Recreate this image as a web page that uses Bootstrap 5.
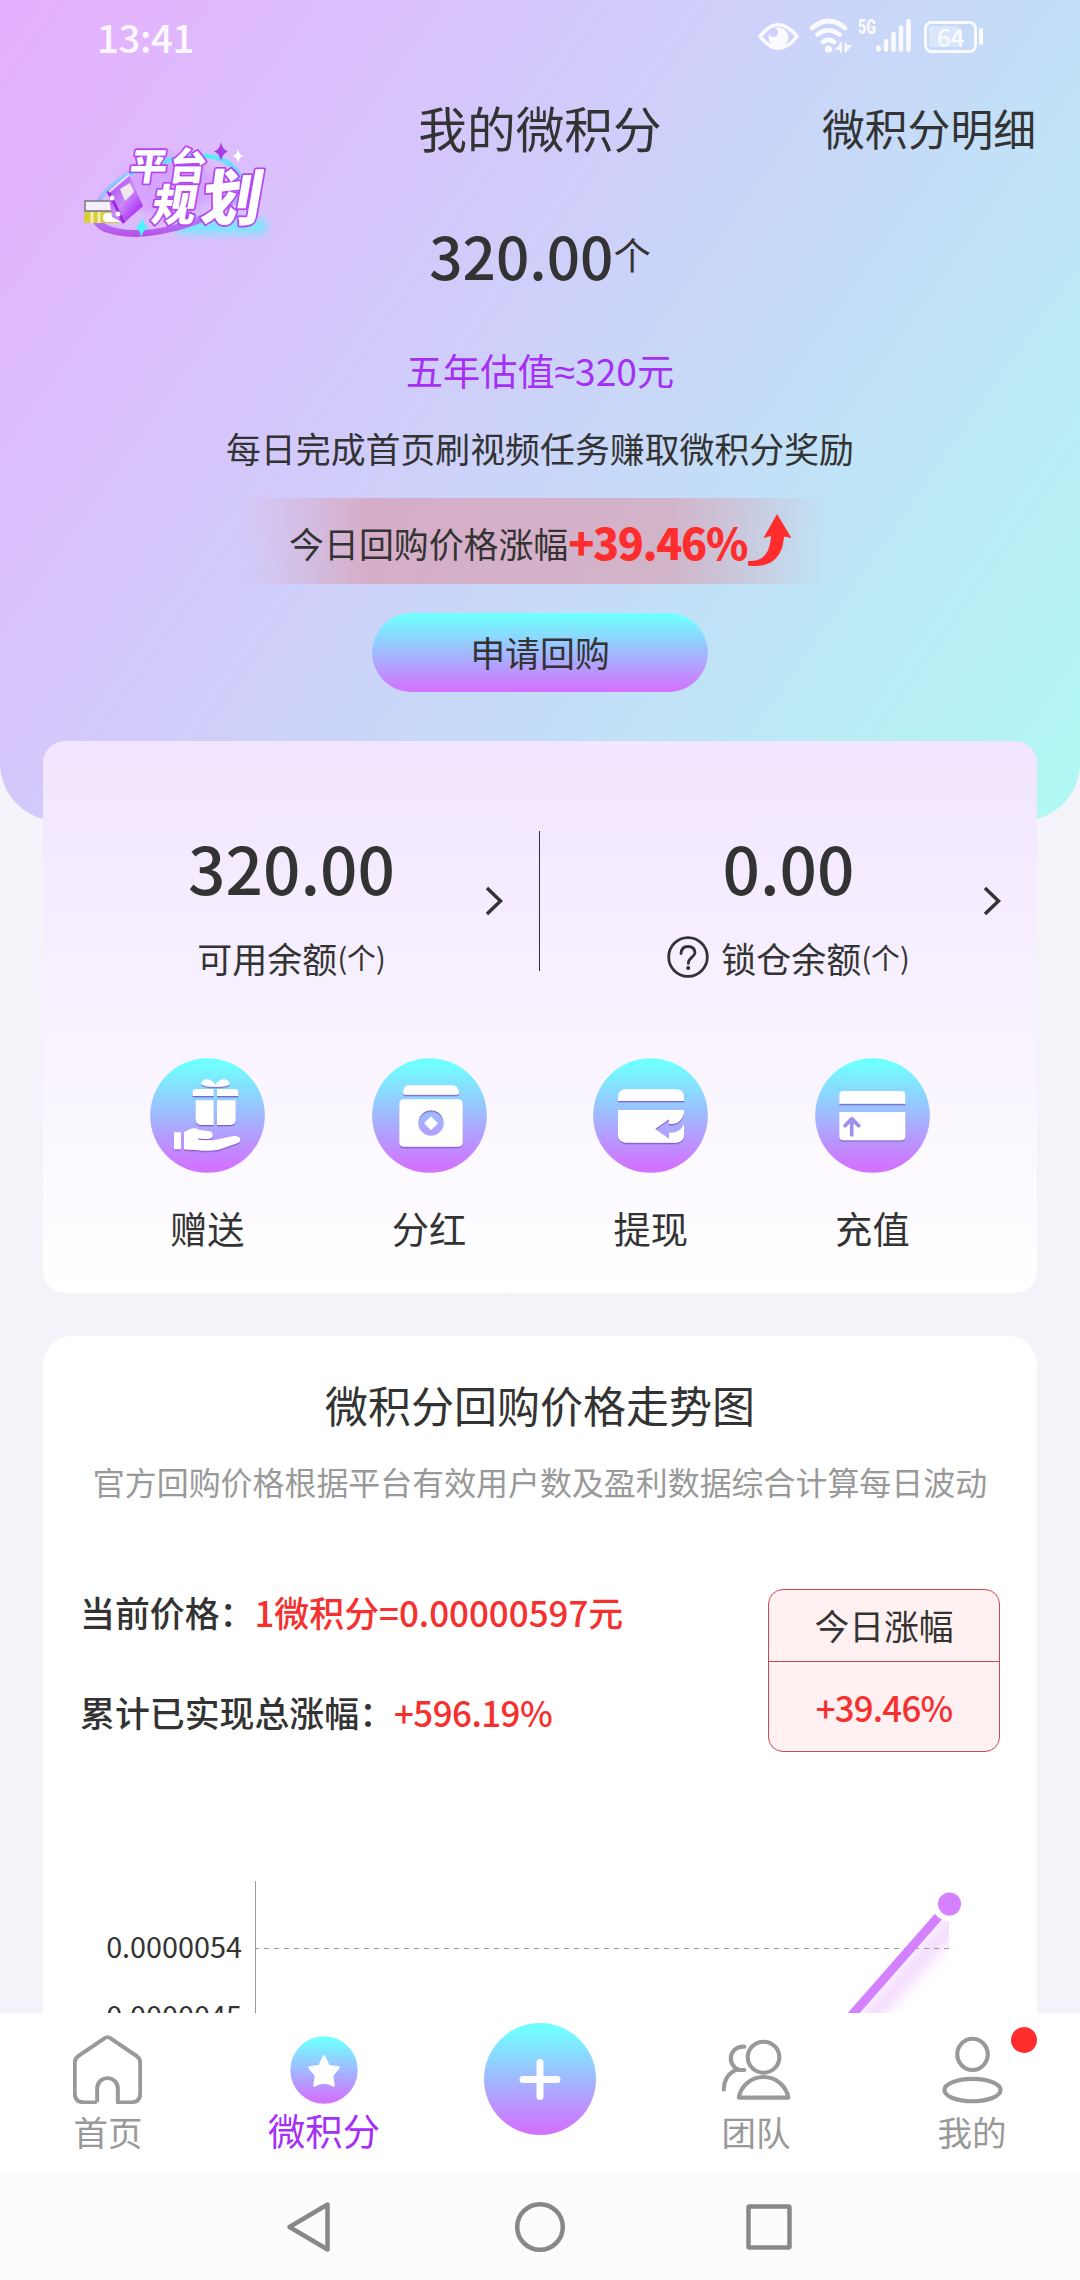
<!DOCTYPE html>
<html lang="zh-CN">
<head>
<meta charset="utf-8">
<meta name="viewport" content="width=device-width, initial-scale=1">
<title>我的微积分</title>
<link href="https://cdn.jsdelivr.net/npm/bootstrap@5.3.0/dist/css/bootstrap.min.css" rel="stylesheet">
<style>
:root{--ink:#333;--violet:#a62ff5;--red:#f5302e;--muted:#999}
body{font-family:"Noto Sans CJK SC",sans-serif;color:var(--ink);background:#f4f3f9;line-height:1;width:1080px;height:2280px;overflow:hidden}
svg{display:block;flex:none}
.screen{height:2280px}
.scroll-area{height:2013px}
.hero{height:821px;border-radius:0 0 58px 58px;background:linear-gradient(125deg,#e7aeff,#b0f9f3)}
.status{height:80px;padding:0 96px 8px 97px;color:#fdf8ff}
.clock{font-size:38.4px;font-weight:500;letter-spacing:-.4px}
.title-row{height:94px;display:grid;grid-template-columns:1fr auto 1fr;align-items:center;padding:1px 44px 0}
.page-title{font-size:48.7px}
.detail-link{font-size:42.8px;color:var(--ink);text-decoration:none;text-align:right}
.promo{left:80px;top:136px}
.promo svg{overflow:visible}
.total{height:161px}
.total-num{font-size:58.5px;font-weight:500;padding-top:1px}
.total-unit{font-size:37.4px}
.estimate{height:71px;font-size:37.2px;color:var(--violet);padding-top:1px}
.approx{font-family:"Noto Sans",sans-serif}
.hint{height:84px;font-size:34.9px;padding-top:1px}
.rise{height:86px;margin-top:8px;width:640px;font-size:34.9px;background:linear-gradient(90deg,rgba(219,150,167,0) 3%,rgba(219,150,167,.2) 11%,rgba(219,150,167,.6) 23%,rgba(219,150,167,.58) 70%,rgba(219,150,167,.2) 87%,rgba(219,150,167,0) 95%)}
.rise-num{font-size:43px;font-weight:900;color:#ff2d2d;letter-spacing:-1.4px}
.buy-btn{width:336px;height:79px;margin-top:29px;border:0;border-radius:40px;font-size:34.9px;color:var(--ink);background:linear-gradient(#70ffff 4%,#d175ff 96%);line-height:1}
.panel{margin:0 43px;border:0}
.wallet{margin-top:-80px;height:552px;border-radius:22px;background:linear-gradient(#f1e5ff,#fff)}
.balances{height:300px}
.balance{width:497px;padding-top:87px}
.bal-num{font-size:65.7px;font-weight:500;height:78px}
.bal-label{font-size:35px;height:102px}
.bal-label span{font-size:28.8px}
.help{margin-right:12px}
.vline{width:1px;height:140px;background:#333;top:90px;left:496px}
.chev-l{left:442px;top:145px}
.chev-r{left:940px;top:145px}
.actions{padding:17px 53.5px 0}
.action{width:221.7px;font-size:37.3px}
.action-label{height:111px}
.trend{margin-top:43px;border-radius:29px;height:900px;background:#fff}
.trend-title{font-size:43px;height:90px;padding-top:47px}
.trend-desc{font-size:31.95px;color:var(--muted);height:67px;margin-top:22px}
.facts{margin-top:74px;padding:0 37px;height:163px}
.facts-left{padding-bottom:15px}
.fact{font-size:34.9px;font-weight:500;height:50px}
.fact b{font-weight:500;color:var(--red)}
.fact .tight{letter-spacing:-.55px}
.fact-first{height:47px}
.today{width:232px;border:1.4px solid #c64b50;border-radius:15px;background:#fff1f1;font-size:34.8px}
.today-top{height:72px;border-bottom:1.4px solid #c64b50}
.today-bot{height:90px;color:var(--red);font-weight:500;letter-spacing:-.8px}
.chart{margin-top:119px}
.tabbar{height:161px;background:#fff;color:var(--muted);font-size:34.5px}
.tab{width:216px;padding-top:21px}
.tab-icon{height:72px}
.tab-label{height:50px}
.tab-on{color:var(--violet);font-size:37.4px}
.home-icon{margin:-1px 2px 1px 0}
.tab-plus{padding-top:10px}
.dot{width:26px;height:26px;background:#ff2d2d;right:43px;top:14px}
.sysnav{height:106px;background:#fcfcfc}
</style>
</head>
<body>
<svg width="0" height="0" class="position-absolute">
  <defs>
    <linearGradient id="orb" x1="0" y1="0" x2="0" y2="1"><stop offset=".05" stop-color="#70ffff"/><stop offset=".95" stop-color="#d173ff"/></linearGradient>
    <filter id="lift" x="-10%" y="-10%" width="120%" height="125%"><feDropShadow dx="0" dy="4" stdDeviation="1" flood-color="#7a50c0" flood-opacity=".85"/></filter>
  </defs>
</svg>
<div class="screen d-flex flex-column">
  <main class="scroll-area overflow-hidden flex-shrink-0">
    <header class="hero position-relative d-flex flex-column align-items-stretch">
      <div class="status d-flex align-items-center justify-content-between">
        <span class="clock">13:41</span>
        <svg width="228" height="44" viewBox="756 14 228 44" fill="none" stroke="#fbfbff" stroke-width="3.6" stroke-linecap="round">
          <path d="M760 36.500Q778.500 13 797 36.500Q778.500 60 760 36.500Z" stroke-linejoin="round"/>
          <circle cx="778.500" cy="37.500" r="10" fill="#fbfbff" stroke="none"/>
          <circle cx="773.500" cy="32.500" r="4.600" fill="#ccd2fb" stroke="none"/>
          <path d="M812 28Q828.500 14 845 28M817.500 34.500Q828.500 26 839.500 34.500M823 42Q828.500 37.500 834 42" stroke-width="4.600"/>
          <circle cx="828.500" cy="49" r="3.500" fill="#fbfbff" stroke="none"/>
          <path d="M841 43v9M841 44l-4 5h4M845.500 43v9M845.500 51l4.500-5h-4.500" stroke-width="2"/>
          <text x="858" y="34" font-size="20" font-family="Roboto" font-weight="900" fill="#fbfbff" stroke="none" textLength="18" lengthAdjust="spacingAndGlyphs">5G</text>
          <path d="M878.500 47.500v2M886 41v8.500M893.500 34v15.500M901 27.500v22M908.500 21v28.500" stroke-width="4.600"/>
          <rect x="925.500" y="22.500" width="50" height="29" rx="6" stroke-width="3"/>
          <rect x="929" y="26" width="30" height="21" rx="2" fill="#fff" fill-opacity=".35" stroke="none"/>
          <text x="937" y="46.500" font-size="24" font-weight="500" fill="#fbfbff" stroke="none">64</text>
          <path d="M981 30v13" stroke-width="4"/>
        </svg>
      </div>
      <div class="title-row">
        <span></span><span class="page-title">我的微积分</span><a class="detail-link" href="#">微积分明细</a>
      </div>
      <div class="promo position-absolute">
        <svg width="200" height="112" viewBox="80 136 200 112">
          <defs>
            <linearGradient id="ring" x1="0" y1="0" x2="0" y2="1"><stop offset="0" stop-color="#56ecff"/><stop offset=".55" stop-color="#a8b4ff"/><stop offset="1" stop-color="#b94de8"/></linearGradient>
            <linearGradient id="book" x1="0" y1="0" x2="1" y2="1"><stop offset="0" stop-color="#a93af2"/><stop offset=".5" stop-color="#c98af8"/><stop offset="1" stop-color="#a000f5"/></linearGradient>
            <filter id="soft" x="-20%" y="-60%" width="140%" height="220%"><feGaussianBlur stdDeviation="4"/></filter>
          </defs>
          <ellipse cx="168" cy="185" rx="48" ry="30" fill="#c878ff" opacity=".35" filter="url(#soft)"/>
          <rect x="175" y="219" width="92" height="15" rx="7" fill="#69edff" opacity=".85" filter="url(#soft)"/>
          <path fill="url(#ring)" fill-rule="evenodd" d="M92 216C92 190 130 164 178 156C218 146 243 164 245 185C247 212 176 236 136 237C108 236 92 230 92 216ZM98 212C98 226 120 231 142 230C178 229 236 205 236 181C235 162 210 153 178 161C136 168 98 192 98 212Z"/>
          <rect x="85" y="201" width="36" height="10" fill="#f5eefc" stroke="#777" stroke-width="1.500"/>
          <rect x="84" y="212" width="35" height="11" fill="#d8ce3a"/><path d="M92 212v11M99 212v11" stroke="#f2edb0" stroke-width="3"/>
          <rect x="103" y="213" width="19" height="9" rx="4" fill="#fff"/>
          <path d="M129 175L143 206L124 223L112 217L108 191Z" fill="url(#book)"/>
          <path d="M108 191L124 223" stroke="#9c2ce0" stroke-width="3"/>
          <path d="M129 175L109 192" stroke="#f1d8ff" stroke-width="2"/>
          <path d="M120 189L130 183L134 192L125 201Z" fill="#f0e6ee"/>
          <circle cx="112" cy="198" r="2.500" fill="#fff"/><circle cx="118" cy="214" r="2.500" fill="#fff"/>
          <g font-weight="900" font-family="Noto Sans CJK SC" fill="#fff" stroke="#b548ef" stroke-width="3.600" stroke-linejoin="round" paint-order="stroke">
            <text transform="translate(128 180) skewX(-8)" font-size="37.500" letter-spacing="2">平台</text>
            <text transform="translate(150 221) skewX(-10)" font-size="44">规</text>
            <text transform="translate(199 220) skewX(-10)" font-size="60">划</text>
          </g>
          <path d="M221 142Q222.500 150 228 151.500Q222.500 153 221 161Q219.500 153 214 151.500Q219.500 150 221 142Z" fill="#a83fe6"/>
          <path d="M238 149Q239 155 243.500 156Q239 157 238 163Q237 157 232.500 156Q237 155 238 149Z" fill="#fff"/>
          <path d="M142 217Q143.500 226 149 227.500Q143.500 229 141 237Q140 229 135 227.500Q140.500 226 142 217Z" fill="#4cf5ff"/>
        </svg>
      </div>
      <div class="total d-flex align-items-center justify-content-center"><span class="total-num">320.00</span><span class="total-unit">个</span></div>
      <div class="estimate d-flex align-items-center justify-content-center">五年估值<span class="approx">≈</span>320元</div>
      <div class="hint d-flex align-items-center justify-content-center">每日完成首页刷视频任务赚取微积分奖励</div>
      <div class="rise d-flex align-items-center justify-content-center align-self-center">
        <span class="pt-1">今日回购价格涨幅</span><span class="rise-num">+39.46%</span>
        <svg width="44" height="54" viewBox="746 513 44 54"><path d="M776 513L790.500 537L783 535.500C782 554 772 568 747 564.500L747 560C763 561 769 551 770 535L762.500 537Z" fill="#ff2d2d"/></svg>
      </div>
      <button class="buy-btn align-self-center p-0">申请回购</button>
    </header>

    <section class="panel wallet position-relative">
      <div class="balances d-flex position-relative">
        <div class="balance d-flex flex-column align-items-center">
          <div class="bal-num d-flex align-items-center">320.00</div>
          <div class="bal-label d-flex align-items-center">可用余额<span>(个)</span></div>
        </div>
        <div class="balance d-flex flex-column align-items-center">
          <div class="bal-num d-flex align-items-center">0.00</div>
          <div class="bal-label d-flex align-items-center">
            <svg class="help" width="42" height="42" viewBox="0 0 42 42" fill="none" stroke="#333" stroke-width="2.800" stroke-linecap="round"><circle cx="21" cy="21" r="19.300"/><path d="M14 17.500Q14.500 10.500 21 10.500T28 16.500C28 21.500 21.500 21 21.300 27.500"/><circle cx="21.200" cy="32" r="1.300" fill="#333" stroke-width="1.500"/></svg>
            锁仓余额<span>(个)</span></div>
        </div>
        <div class="vline position-absolute"></div>
        <svg class="chev-l position-absolute" width="20" height="30" fill="none" stroke="#333" stroke-width="3.500"><path d="M2 2L15.500 15L2 28"/></svg>
        <svg class="chev-r position-absolute" width="20" height="30" fill="none" stroke="#333" stroke-width="3.500"><path d="M2 2L15.500 15L2 28"/></svg>
      </div>
      <div class="actions d-flex">
        <div class="action d-flex flex-column align-items-center flex-shrink-0">
          <svg width="115" height="115" viewBox="90 84 345 345"><circle cx="262.500" cy="256.500" r="172" fill="url(#orb)"/>
            <g fill="#fff" filter="url(#lift)"><path d="M286 164C272 142 246 143 243 163C258 172 272 170 286 170C300 170 316 172 330 163C326 143 300 142 286 164Z"/><path d="M218 198V187Q218 177 228 177H281V198ZM291 198V177H345Q355 177 355 187V198Z"/><path d="M227 211H281V285H245Q227 285 227 268ZM291 211H347V268Q347 285 329 285H291Z"/><path d="M162 307H183V358H162ZM192 307C215 293 225 292 238 300L265 303C283 304 281 326 268 326C255 329 245 326 235 325V330L280 331L340 318C365 317 365 334 355 338L300 358C265 366 230 360 192 358Z"/></g></svg>
          <div class="action-label d-flex align-items-center">赠送</div>
        </div>
        <div class="action d-flex flex-column align-items-center flex-shrink-0">
          <svg width="115" height="115" viewBox="756 84 345 345"><circle cx="928.500" cy="256.500" r="172" fill="url(#orb)"/>
            <g fill="#fff" filter="url(#lift)"><path d="M850 182Q854 166 864 166H1002Q1010 167 1016 182Q1020 194 1008 194H858Q846 194 850 182Z"/><path fill-rule="evenodd" d="M851 208H1014Q1028 208 1028 222V337Q1028 350 1014 350H851Q838 350 838 337V222Q838 208 851 208ZM933 241A38 38 0 1 0 933 317A38 38 0 1 0 933 241Z"/></g><path d="M933 262L951 280L933 298L915 280Z" fill="#fff" stroke="#fff" stroke-width="4" stroke-linejoin="round"/></svg>
          <div class="action-label d-flex align-items-center">分红</div>
        </div>
        <div class="action d-flex flex-column align-items-center flex-shrink-0">
          <svg width="115" height="115" viewBox="99 84 345 345"><circle cx="271.500" cy="256.500" r="172" fill="url(#orb)"/>
            <g fill="#fff" filter="url(#lift)"><path d="M174 213V202Q174 178 198 178H348Q372 178 372 202V213Z"/><path d="M174 240H372C374 268 350 286 327 281V268L285 297L327 326V308Q360 310 372 282V313Q372 338 348 338H198Q174 338 174 313Z"/></g></svg>
          <div class="action-label d-flex align-items-center">提现</div>
        </div>
        <div class="action d-flex flex-column align-items-center flex-shrink-0">
          <svg width="115" height="115" viewBox="765 84 345 345"><circle cx="937.500" cy="256.500" r="172" fill="url(#orb)"/>
            <g fill="#fff" filter="url(#lift)"><path d="M838 221V195Q838 183 850 183H1024Q1036 183 1036 195V221Z"/><path d="M838 246H1036V319Q1036 331 1024 331H850Q838 331 838 319Z"/></g><path d="M855 287L875 266L896 287M875 268V315" fill="none" stroke="#9c90ea" stroke-width="11" stroke-linecap="round" stroke-linejoin="round"/></svg>
          <div class="action-label d-flex align-items-center">充值</div>
        </div>
      </div>
    </section>

    <section class="panel trend overflow-hidden">
      <div class="trend-title d-flex align-items-center justify-content-center">微积分回购价格走势图</div>
      <div class="trend-desc d-flex align-items-center justify-content-center">官方回购价格根据平台有效用户数及盈利数据综合计算每日波动</div>
      <div class="facts d-flex justify-content-between">
        <div class="facts-left d-flex flex-column justify-content-between">
          <div class="fact fact-first d-flex align-items-center">当前价格：<b>1微积分=0.00000597元</b></div>
          <div class="fact d-flex align-items-center">累计已实现总涨幅：<b class="tight">+596.19%</b></div>
        </div>
        <div class="today">
          <div class="today-top d-flex align-items-center justify-content-center">今日涨幅</div>
          <div class="today-bot d-flex align-items-center justify-content-center">+39.46%</div>
        </div>
      </div>
      <svg class="chart" width="994" height="200" viewBox="43 1871 994 200">
        <defs>
          <filter id="glow" filterUnits="userSpaceOnUse" x="700" y="1850" width="330" height="300"><feGaussianBlur stdDeviation="8"/></filter>
          <clipPath id="plot"><rect x="256" y="1850" width="693" height="300"/></clipPath>
        </defs>
        <g clip-path="url(#plot)"><path d="M961 1914L815 2080" stroke="#d580ff" stroke-width="15" opacity=".36" filter="url(#glow)"/></g>
        <path d="M255.500 1881V2071" stroke="#999" stroke-width="1"/>
        <path d="M256 1948.500H949" stroke="#999" stroke-width="1" stroke-dasharray="5 5" stroke-dashoffset="2"/>
        <path d="M949.500 1904L809 2064" stroke="#d580ff" stroke-width="9"/>
        <circle cx="949.500" cy="1904" r="14.500" fill="#d580ff" stroke="#fff" stroke-width="6"/>
        <g font-family="Noto Sans CJK SC" font-size="28.800" fill="#333" text-anchor="end"><text x="242" y="1958">0.0000054</text><text x="242" y="2027">0.0000045</text></g>
      </svg>
    </section>
  </main>

  <nav class="tabbar d-flex flex-shrink-0">
    <div class="tab d-flex flex-column align-items-center">
      <div class="tab-icon d-flex align-items-center"><svg class="home-icon" width="69" height="69" viewBox="212 107 200 208" preserveAspectRatio="none" fill="none" stroke="#999" stroke-width="11.500" stroke-linejoin="round"><path d="M281 310H245Q217 310 217 282V190Q217 178 228 170L303 117Q312 110 321 117L396 170Q407 178 407 190V282Q407 310 379 310H342V268A30 31 0 0 0 282 268V310"/></svg></div>
      <div class="tab-label d-flex align-items-center">首页</div>
    </div>
    <div class="tab tab-on d-flex flex-column align-items-center">
      <div class="tab-icon d-flex align-items-center"><svg width="68" height="68" viewBox="0 0 68 68"><circle cx="34" cy="34" r="33.700" fill="url(#orb)"/><path d="M34 20.500L38.500 30L48.500 31.500L42 39.500L43.500 49.500Q34 43.500 24.500 49.500L26 39.500L19.500 31.500L29.500 30Z" fill="#fff" stroke="#fff" stroke-width="2.500" stroke-linejoin="round"/></svg></div>
      <div class="tab-label d-flex align-items-center">微积分</div>
    </div>
    <div class="tab tab-plus d-flex flex-column align-items-center">
      <svg width="112" height="112" viewBox="0 0 112 112"><circle cx="56" cy="56" r="56" fill="url(#orb)"/><path d="M56 39.500V73.500M39 56.500H73" stroke="#fff" stroke-width="7" stroke-linecap="round"/></svg>
    </div>
    <div class="tab d-flex flex-column align-items-center">
      <div class="tab-icon d-flex align-items-center"><svg width="70" height="62" viewBox="524 120 204 184" preserveAspectRatio="none" fill="none" stroke="#999" stroke-width="12" stroke-linecap="round" stroke-linejoin="round"><circle cx="648" cy="174" r="46"/><path d="M576 294A73 73 0 0 1 720 294Z"/><path d="M592 143A35 35 0 0 0 574 210Q534 222 532 270M574 212H592"/></svg></div>
      <div class="tab-label d-flex align-items-center">团队</div>
    </div>
    <div class="tab d-flex flex-column align-items-center position-relative">
      <div class="tab-icon d-flex align-items-center"><svg width="61" height="68" viewBox="1166 112 176 200" preserveAspectRatio="none" fill="none" stroke="#999" stroke-width="12"><ellipse cx="1254" cy="166" rx="44" ry="46"/><ellipse cx="1254" cy="271" rx="81" ry="33"/></svg></div>
      <div class="tab-label d-flex align-items-center">我的</div>
      <span class="dot position-absolute rounded-circle"></span>
    </div>
  </nav>
  <div class="sysnav flex-shrink-0 d-flex justify-content-center align-items-center">
    <svg width="520" height="56" viewBox="280 2199 520 56" fill="none" stroke="#888" stroke-width="4.500" stroke-linejoin="round"><path d="M289.500 2227L327.500 2204.500V2249.500Z"/><circle cx="540" cy="2227" r="22.800"/><rect x="748.500" y="2206.500" width="41" height="41" rx="1"/></svg>
  </div>
</div>
<script src="https://cdn.jsdelivr.net/npm/bootstrap@5.3.0/dist/js/bootstrap.bundle.min.js"></script>
</body>
</html>
